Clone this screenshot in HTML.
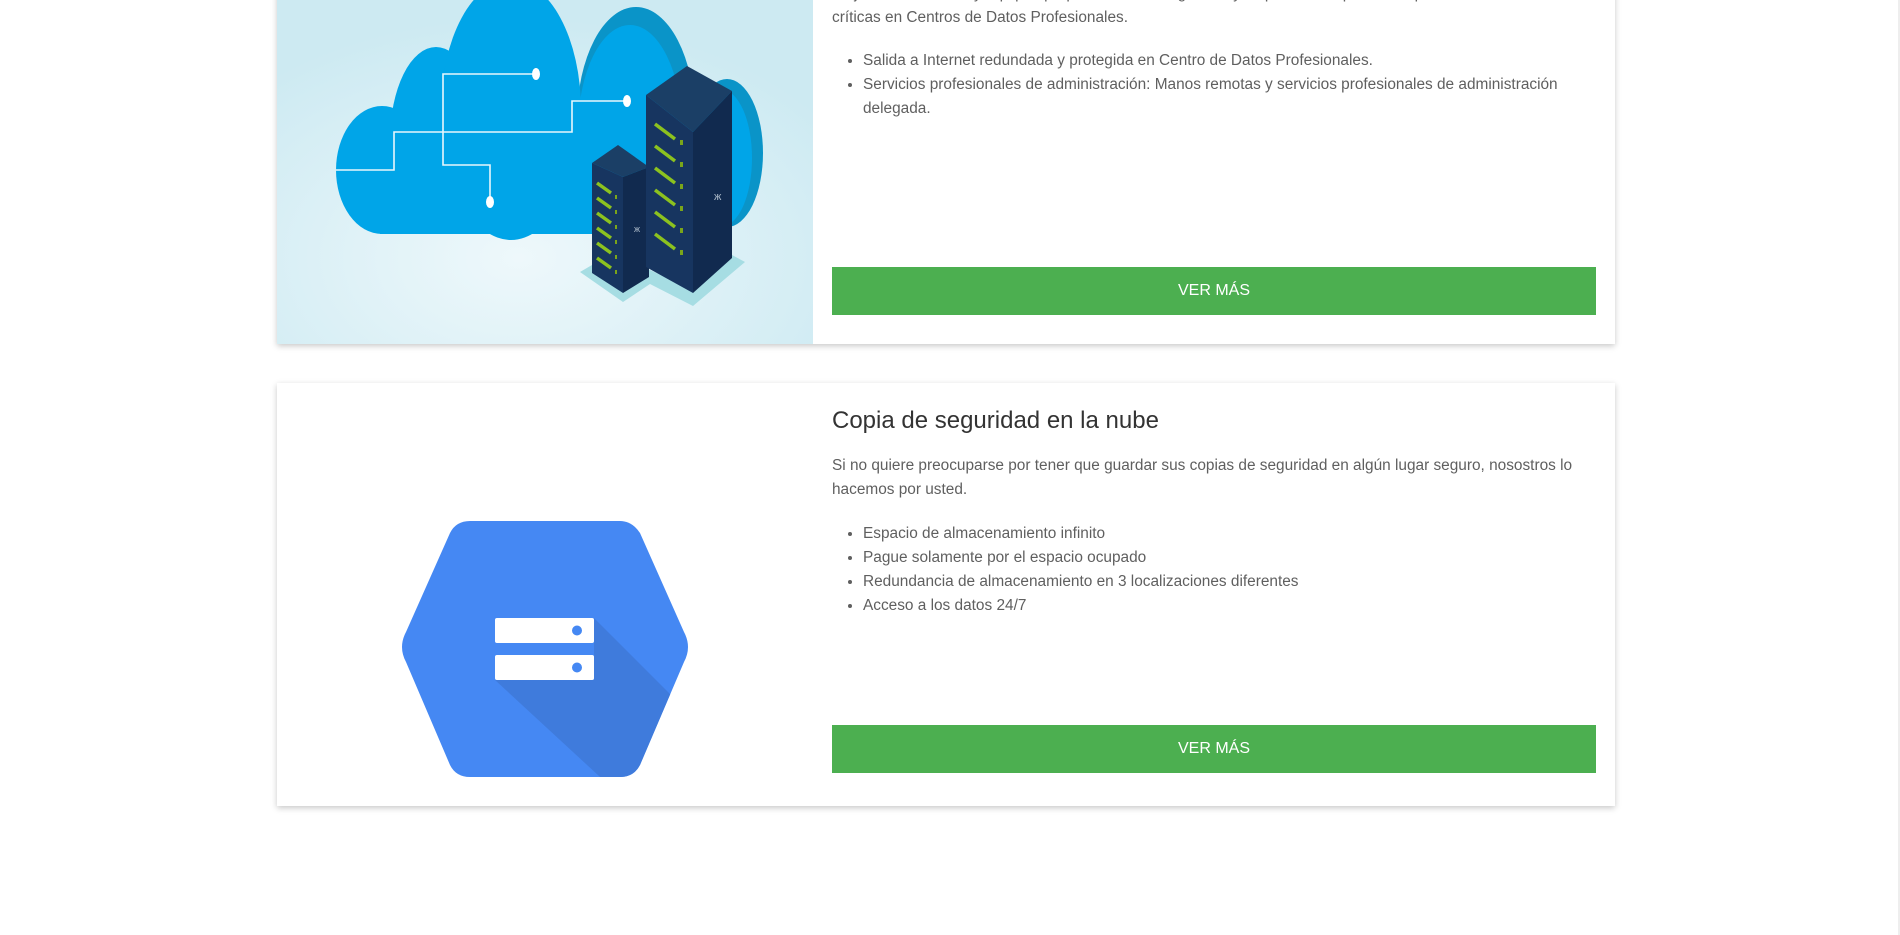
<!DOCTYPE html>
<html><head><meta charset="utf-8"><style>
html,body{margin:0;padding:0;background:#fff;width:1900px;height:935px;overflow:hidden;font-family:"Liberation Sans",sans-serif;}
.card{position:absolute;left:277px;width:1338px;background:#fff;box-shadow:0 2px 6px rgba(0,0,0,.22);}
.txt{position:absolute;left:832px;width:766px;color:#5f5f5f;font-size:15.4px;line-height:24px;}
.txt ul{margin:0;padding-left:31px;}
.btn{position:absolute;left:832px;width:764px;height:48px;background:#4caf50;color:#fff;font-size:16px;text-align:center;line-height:48px;}
h3{position:absolute;left:832px;margin:0;font-weight:normal;font-size:24px;color:#333;}
</style></head><body>
<div class="card" style="top:-20px;height:364px;"></div>
<svg style="position:absolute;left:277px;top:0" width="536" height="344" viewBox="277 0 536 344">
<defs><radialGradient id="g" cx="0.45" cy="0.75" r="0.7"><stop offset="0" stop-color="#eef8fb"/><stop offset="1" stop-color="#cdeaf2"/></radialGradient></defs>
<rect x="277" y="0" width="536" height="344" fill="url(#g)"/>
<ellipse cx="636" cy="120" rx="59" ry="113" fill="#0a94c8"/>
<ellipse cx="727" cy="153" rx="36" ry="74" fill="#0a94c8"/>
<ellipse cx="630" cy="130" rx="52" ry="105" fill="#00a5e8"/>
<ellipse cx="722" cy="158" rx="30" ry="68" fill="#00a5e8"/>
<ellipse cx="382" cy="170" rx="46" ry="64" fill="#00a5e8"/>
<ellipse cx="436" cy="140" rx="46" ry="93" fill="#00a5e8"/>
<ellipse cx="511" cy="110" rx="70" ry="130" fill="#00a5e8"/>
<rect x="380" y="110" width="338" height="124" fill="#00a5e8"/>
<g stroke="#e8f6fc" stroke-width="1.6" fill="none">
<path d="M336 170H394V132H572V101H627"/><path d="M536 74H443V165H490V202"/></g>
<g fill="#fff"><ellipse cx="627" cy="101" rx="4" ry="6"/><ellipse cx="536" cy="74" rx="4" ry="6"/><ellipse cx="490" cy="202" rx="4" ry="6"/></g>
<polygon points="580,272 623,302 650,284 693,306 745,262 732,255 693,290 650,270 592,265" fill="#a6dde3"/>
<polygon points="592,163 618,145 649,167 623,177" fill="#1b3f66"/>
<polygon points="592,163 623,177 623,293 592,273" fill="#173560"/>
<polygon points="623,177 649,167 649,277 623,293" fill="#112a4f"/>
<polygon points="646,95 687,66 732,91 693,132" fill="#1b3f66"/>
<polygon points="646,95 693,132 693,293 646,267" fill="#173560"/>
<polygon points="693,132 732,91 732,258 693,293" fill="#112a4f"/>
<g stroke="#8cc21f" stroke-width="3.5">
<path d="M655 124L675 139M655 146L675 161M655 168L675 183M655 190L675 205M655 212L675 227M655 234L675 249"/>
<path d="M597 183L611 193M597 198L611 208M597 213L611 223M597 228L611 238M597 243L611 253M597 258L611 268"/></g>
<g fill="#7aa51a"><rect x="680" y="140" width="3" height="5"/><rect x="680" y="162" width="3" height="5"/><rect x="680" y="184" width="3" height="5"/><rect x="680" y="206" width="3" height="5"/><rect x="680" y="228" width="3" height="5"/><rect x="680" y="250" width="3" height="5"/>
<rect x="615" y="195" width="2" height="4"/><rect x="615" y="210" width="2" height="4"/><rect x="615" y="225" width="2" height="4"/><rect x="615" y="240" width="2" height="4"/><rect x="615" y="255" width="2" height="4"/><rect x="615" y="270" width="2" height="4"/></g>
<text x="714" y="200" fill="#aab8c8" font-size="11" font-family="Liberation Sans">ж</text>
<text x="634" y="232" fill="#aab8c8" font-size="9" font-family="Liberation Sans">ж</text>
</svg>
<div class="txt" style="top:-18px;">Aloje sus servidores y equipos propios con total seguridad y disponibilidad para sus aplicaciones<br>críticas en Centros de Datos Profesionales.
<ul style="margin-top:19px;"><li>Salida a Internet redundada y protegida en Centro de Datos Profesionales.</li><li>Servicios profesionales de administración: Manos remotas y servicios profesionales de administración delegada.</li></ul></div>
<div class="btn" style="top:267px;">VER MÁS</div>

<div class="card" style="top:383px;height:423px;"></div>
<svg style="position:absolute;left:390px;top:510px" width="310" height="280" viewBox="390 510 310 280">
<defs><clipPath id="h"><path d="M470 521H620Q632 521 640 533L684 632Q692 647 684 662L640 765Q634 777 620 777H470Q456 777 450 765L406 662Q398 647 406 632L450 533Q456 521 470 521Z"/></clipPath></defs>
<path d="M470 521H620Q632 521 640 533L684 632Q692 647 684 662L640 765Q634 777 620 777H470Q456 777 450 765L406 662Q398 647 406 632L450 533Q456 521 470 521Z" fill="#4588f3"/>
<polygon clip-path="url(#h)" points="594,618 700,724 700,800 625,800 495,680 594,680" fill="#3f7bdc"/>
<rect x="495" y="618" width="99" height="25" rx="2" fill="#fff"/>
<rect x="495" y="655" width="99" height="25" rx="2" fill="#fff"/>
<circle cx="577" cy="630.5" r="5" fill="#4588f3"/><circle cx="577" cy="667.5" r="5" fill="#4588f3"/>
</svg>
<h3 style="top:407px;">Copia de seguridad en la nube</h3>
<div class="txt" style="top:454px;">Si no quiere preocuparse por tener que guardar sus copias de seguridad en algún lugar seguro, nosostros lo hacemos por usted.
<ul style="margin-top:20px;"><li>Espacio de almacenamiento infinito</li><li>Pague solamente por el espacio ocupado</li><li>Redundancia de almacenamiento en 3 localizaciones diferentes</li><li>Acceso a los datos 24/7</li></ul></div>
<div class="btn" style="top:725px;">VER MÁS</div>
<div style="position:absolute;right:0;top:0;width:2px;height:935px;background:#eee"></div>
</body></html>
